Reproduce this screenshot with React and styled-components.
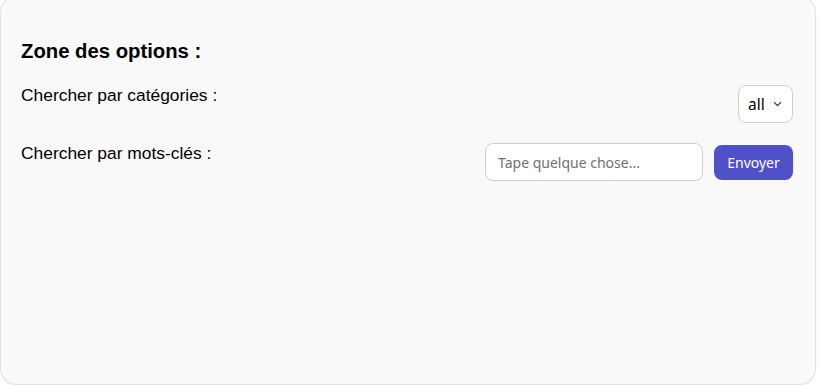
import React from 'react'
import styled, { createGlobalStyle } from 'styled-components'

const GlobalStyle = createGlobalStyle`
  body {
    margin: 0;
    background: #ffffff;
    font-family: "Liberation Sans", Arial, sans-serif;
  }
`

const Card = styled.section`
  box-sizing: border-box;
  width: 816px;
  height: 389px;
  margin-top: -4px;
  padding: 20px 22px 20px 20px;
  background: #f9f9f9;
  border: 1px solid #e2e2e2;
  border-radius: 16px;
  box-shadow: 0 1px 2px rgba(0, 0, 0, 0.06);
`

const Title = styled.h2`
  margin: 23px 0 22px;
  font-size: 20.3px;
  font-weight: 700;
  line-height: 23px;
  color: #000;
`

const Row = styled.div`
  display: flex;
  justify-content: space-between;
  align-items: flex-start;
  margin-bottom: 20px;
`

const Label = styled.p`
  margin: 0;
  font-size: 17.4px;
  line-height: 20px;
  color: #000;
`

const Controls = styled.div`
  display: flex;
  align-items: center;
  gap: 11px;
  margin-top: 0;
`

const SelectBox = styled.div`
  position: relative;
  width: 55px;
  height: 38px;
`

const Select = styled.select`
  box-sizing: border-box;
  width: 100%;
  height: 100%;
  padding: 0 0 0 9px;
  appearance: none;
  font-family: "Noto Sans", sans-serif;
  font-size: 15.5px;
  color: #000;
  background: #fff;
  border: 1px solid #cfcfcf;
  border-radius: 8px;
`

const Chevron = styled.svg`
  position: absolute;
  top: 16px;
  right: 11px;
  width: 9px;
  height: 6px;
  pointer-events: none;
`

const Input = styled.input`
  box-sizing: border-box;
  width: 218px;
  height: 38px;
  padding: 0 12px;
  font-family: "Noto Sans", sans-serif;
  font-size: 14px;
  background: #fff;
  border: 1px solid #cfcfcf;
  border-radius: 8px;
  &::placeholder {
    color: #6f6f6f;
  }
`

const Button = styled.button`
  box-sizing: border-box;
  width: 79px;
  height: 35px;
  font-family: "Noto Sans", sans-serif;
  font-size: 14px;
  color: #fff;
  background: #4f51c8;
  border: none;
  border-radius: 8px;
`

const App = () => {
  return (
    <>
      <GlobalStyle />
      <Card>
        <Title>Zone des options :</Title>

        <Row>
          <Label>Chercher par catégories :</Label>
          <Controls>
            <SelectBox>
              <Select defaultValue="all">
                <option value="all">all</option>
              </Select>
              <Chevron viewBox="0 0 9 6">
                <path d="M1 1.2 L4.5 4.7 L8 1.2" fill="none" stroke="#333" strokeWidth="1.2" />
              </Chevron>
            </SelectBox>
          </Controls>
        </Row>

        <Row>
          <Label>Chercher par mots-clés :</Label>
          <Controls>
            <Input type="text" placeholder="Tape quelque chose..." />
            <Button>Envoyer</Button>
          </Controls>
        </Row>
      </Card>
    </>
  )
}

export default App
